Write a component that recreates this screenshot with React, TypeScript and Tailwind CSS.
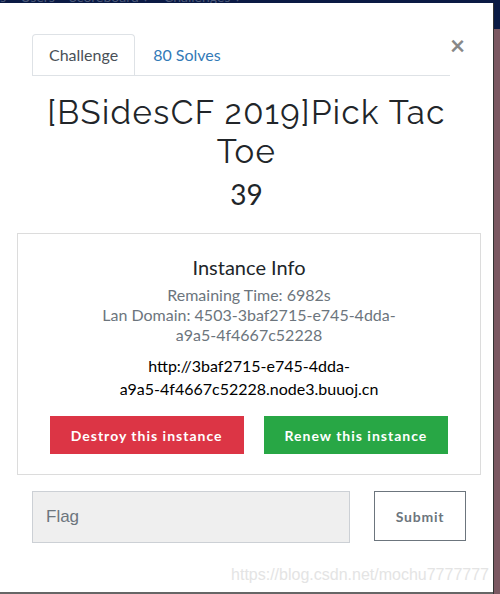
import React from "react";

export default function App() {
  return (
    <div className="w-[500px] h-[594px] flex flex-col overflow-hidden bg-white" style={{ fontFamily: "Lato, 'Open Sans', sans-serif" }}>
      <div className="h-[3px] bg-[#0a1a44] overflow-hidden shrink-0">
        <div className="-mt-[10px] text-[14px] text-[#4a5878] whitespace-nowrap leading-[13px]">
          s&nbsp;&nbsp;&nbsp;&nbsp;Users&nbsp;&nbsp;&nbsp;&nbsp;Scoreboard ▾&nbsp;&nbsp;&nbsp;&nbsp;Challenges ▾
        </div>
      </div>
      <div className="flex flex-1 min-h-0">
        <div className="w-[493px] flex flex-col bg-white">
          {/* Tabs */}
          <div className="flex items-start pl-[32px] pr-[28px] pt-[31px]">
            <div className="flex w-[420px] border-b border-[#dee2e6]">
              <div className="h-[41px] px-[16px] flex items-center border border-b-0 border-[#dee2e6] rounded-t-[4px] bg-white -mb-px text-[16px] text-[#495057]">
                Challenge
              </div>
              <div className="h-[41px] px-[18px] flex items-center text-[16px] text-[#337ab7]">80 Solves</div>
            </div>
            <div className="ml-auto -mt-[2px] text-[26px] font-bold text-[#888] leading-none">×</div>
          </div>
          {/* Title */}
          <div className="mt-[17px] text-center text-[33px] leading-[39px] text-[#212529] tracking-[1.4px] px-[40px]" style={{ fontFamily: "Raleway, 'Open Sans', Lato, sans-serif" }}>
            [BSidesCF 2019]Pick Tac Toe
          </div>
          <div className="mt-[3px] text-center text-[28px] leading-[40px] text-[#212529]">39</div>
          {/* Instance box */}
          <div className="mt-[19px] mx-[17px] w-[464px] h-[242px] border border-[#dcdcdc] flex flex-col items-center">
            <div className="mt-[20px] text-[20px] leading-[26px] text-[#212529]">Instance Info</div>
            <div className="mt-[5px] w-[300px] text-center text-[16px] leading-[20px] text-[#6c757d]">
              <div>Remaining Time: 6982s</div>
              <div>Lan Domain: 4503-3baf2715-e745-4dda-a9a5-4f4667c52228</div>
            </div>
            <div className="mt-[9px] text-center text-[16px] leading-[23px] text-[#000]">
              <div>http://3baf2715-e745-4dda-</div>
              <div>a9a5-4f4667c52228.node3.buuoj.cn</div>
            </div>
            <div className="mt-[16px] flex gap-[20px]">
              <div className="h-[38px] px-[21px] flex items-center bg-[#dc3545] text-white text-[14px] font-bold tracking-[1px]">Destroy this instance</div>
              <div className="h-[38px] px-[21px] flex items-center bg-[#28a745] text-white text-[14px] font-bold tracking-[1px]">Renew this instance</div>
            </div>
          </div>
          {/* Flag row */}
          <div className="mt-[16px] flex items-start pl-[32px]">
            <div className="w-[318px] h-[52px] bg-[#efefef] border border-[#ccd0d5] flex items-center pl-[13px] text-[17px] text-[#6c757d]" style={{ fontFamily: "'Liberation Sans', Arial, sans-serif" }}>
              Flag
            </div>
            <div className="ml-[24px] w-[92px] h-[50px] border border-[#6c757d] flex items-center justify-center text-[14px] font-bold text-[#6c757d] tracking-[0.8px]">
              Submit
            </div>
          </div>
          <div className="mt-auto flex justify-end pr-[4px] pb-[5px]">
            <div className="text-[16px] text-[#e4e4e4]" style={{ fontFamily: "'Liberation Sans', Arial, sans-serif" }}>https://blog.csdn.net/mochu7777777</div>
          </div>
          <div className="h-[2px] bg-[#666] shrink-0" />
        </div>
        <div className="w-px bg-[#333]" />
        <div className="flex-1 flex flex-col">
          <div className="h-[26px] bg-[#0a1a44]" />
          <div className="flex-1 bg-[#7b5862]" />
        </div>
      </div>
    </div>
  );
}
